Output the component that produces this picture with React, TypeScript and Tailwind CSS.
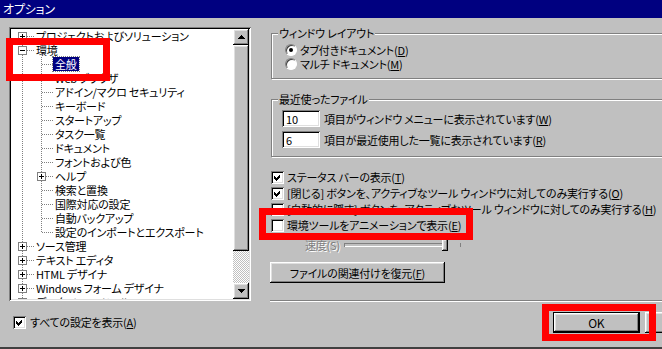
import React from 'react';

const raised =
  'shadow-[inset_-1px_-1px_0_#000,inset_1px_1px_0_#fff,inset_-2px_-2px_0_#808080,inset_2px_2px_0_#dfdfdf]';
const sunken =
  'shadow-[inset_1px_1px_0_#808080,inset_-1px_-1px_0_#fff,inset_2px_2px_0_#000,inset_-2px_-2px_0_#dfdfdf]';
const etched = 'border border-[#808080] shadow-[inset_1px_1px_0_#fff,1px_1px_0_#fff]';

type TreeRow = {
  label: string;
  level: 0 | 1;
  box?: '+' | '-';
  first?: boolean;
  last?: boolean;
  selected?: boolean;
};

const rows: TreeRow[] = [
  { label: 'プロジェクトおよびソリューション', level: 0, box: '+', first: true },
  { label: '環境', level: 0, box: '-' },
  { label: '全般', level: 1, selected: true },
  { label: 'Web ブラウザ', level: 1 },
  { label: 'アドイン/マクロ セキュリティ', level: 1 },
  { label: 'キーボード', level: 1 },
  { label: 'スタートアップ', level: 1 },
  { label: 'タスク一覧', level: 1 },
  { label: 'ドキュメント', level: 1 },
  { label: 'フォントおよび色', level: 1 },
  { label: 'ヘルプ', level: 1, box: '+' },
  { label: '検索と置換', level: 1 },
  { label: '国際対応の設定', level: 1 },
  { label: '自動バックアップ', level: 1 },
  { label: '設定のインポートとエクスポート', level: 1, last: true },
  { label: 'ソース管理', level: 0, box: '+' },
  { label: 'テキスト エディタ', level: 0, box: '+' },
  { label: 'HTML デザイナ', level: 0, box: '+' },
  { label: 'Windows フォーム デザイナ', level: 0, box: '+' },
  { label: 'データベース ツール', level: 0, box: '+' },
];

function Guide({
  vert,
  horiz,
  box,
}: {
  vert: 'full' | 'top' | 'bottom' | 'none';
  horiz: boolean;
  box?: '+' | '-';
}) {
  return (
    <svg width="19" height="14" className="shrink-0" shapeRendering="crispEdges">
      {vert !== 'none' && (
        <line
          x1="7.5"
          x2="7.5"
          y1={vert === 'bottom' ? 8 : 0}
          y2={vert === 'top' ? 8 : 14}
          stroke="#808080"
          strokeDasharray="1 1"
        />
      )}
      {horiz && <line x1="8" x2="19" y1="7.5" y2="7.5" stroke="#808080" strokeDasharray="1 1" />}
      {box && (
        <>
          <rect x="3.5" y="3.5" width="8" height="8" fill="#fff" stroke="#808080" />
          <line x1="5" x2="10" y1="7.5" y2="7.5" stroke="#000" />
          {box === '+' && <line x1="7.5" x2="7.5" y1="5" y2="10" stroke="#000" />}
        </>
      )}
    </svg>
  );
}

function Arrow({ down }: { down?: boolean }) {
  return (
    <svg width="7" height="4" shapeRendering="crispEdges">
      <path d={down ? 'M0 0H7L3.5 4Z' : 'M3.5 0L7 4H0Z'} fill="#000" />
    </svg>
  );
}

function Checkbox({ checked }: { checked?: boolean }) {
  return (
    <div className={`h-[13px] w-[13px] shrink-0 bg-white ${sunken}`}>
      {checked && (
        <svg width="13" height="13" shapeRendering="crispEdges">
          <path d="M3 5L5 7L9 3V6L5 10L3 8Z" fill="#000" />
        </svg>
      )}
    </div>
  );
}

function Radio({ checked }: { checked?: boolean }) {
  return (
    <div className="flex h-[12px] w-[12px] shrink-0 items-center justify-center rounded-full border border-t-[#808080] border-l-[#808080] border-r-white border-b-white bg-white shadow-[inset_1px_1px_0_#404040]">
      {checked && <div className="h-[4px] w-[4px] rounded-full bg-black" />}
    </div>
  );
}

function Tree() {
  return (
    <div className={`flex h-[274px] w-[242px] bg-white p-[2px] ${sunken}`}>
      <div className="w-[222px] overflow-hidden">
        {rows.map(r => (
          <div key={r.label} className="flex h-[14px] items-center pl-[4px] whitespace-nowrap">
            {r.level === 0 ? (
              <Guide vert={r.first ? 'bottom' : 'full'} horiz box={r.box} />
            ) : (
              <>
                <Guide vert="full" horiz={false} />
                <Guide vert={r.last ? 'top' : 'full'} horiz box={r.box} />
              </>
            )}
            <span
              className={`px-[2px] leading-[14px] ${
                r.selected ? 'bg-[#000080] text-white outline-1 outline-dotted outline-[#808080]' : ''
              }`}
            >
              {r.label}
            </span>
          </div>
        ))}
      </div>
      <div className="flex w-[16px] flex-col bg-[#c0c0c0]">
        <div className={`flex h-[16px] items-center justify-center ${raised}`}>
          <Arrow />
        </div>
        <div className={`h-[206px] bg-[#c0c0c0] ${raised}`} />
        <div className="h-[32px] bg-[repeating-conic-gradient(#fff_0_25%,#c0c0c0_0_50%)] bg-[length:2px_2px]" />
        <div className={`flex h-[16px] items-center justify-center ${raised}`}>
          <Arrow down />
        </div>
      </div>
    </div>
  );
}

export default function App() {
  return (
    <div className="relative h-[349px] w-[662px] overflow-hidden border-b-2 border-b-[#404040] bg-[#c0c0c0] font-['Noto_Sans_CJK_JP','Noto_Sans_CJK_SC',sans-serif] text-[11px] leading-[14px] tracking-[-0.2px] text-black [font-feature-settings:'palt']">
      <div className="flex h-[18px] items-center bg-[#000080] px-[3px] text-[12px] text-white">オプション</div>
      <div className="flex">
        {/* left: category tree */}
        <div className="w-[251px] shrink-0 pt-[9px] pl-[9px]">
          <Tree />
          <div className="mt-[14px] ml-[4px] flex items-center gap-[4px]">
            <Checkbox checked />
            <span>
              すべての設定を表示(<span className="underline">A</span>)
            </span>
          </div>
        </div>

        {/* right: settings page */}
        <div className="w-[480px] shrink-0 pl-[20px]">
          <div className={`mt-[15px] h-[46px] w-[420px] ${etched}`}>
            <div className="-mt-[8px] ml-[6px] w-fit bg-[#c0c0c0] px-[1px]">ウィンドウ レイアウト</div>
            <div className="mt-[3px] ml-[13px] flex h-[14px] items-center gap-[3px]">
              <Radio checked />
              <span>
                タブ付きドキュメント(<span className="underline">D</span>)
              </span>
            </div>
            <div className="ml-[13px] flex h-[14px] items-center gap-[3px]">
              <Radio />
              <span>
                マルチ ドキュメント(<span className="underline">M</span>)
              </span>
            </div>
          </div>

          <div className={`mt-[20px] h-[58px] w-[420px] ${etched}`}>
            <div className="-mt-[8px] ml-[6px] w-fit bg-[#c0c0c0] px-[1px]">最近使ったファイル</div>
            <div className="mt-[4px] ml-[10px] flex items-center gap-[4px]">
              <div className={`h-[17px] w-[38px] bg-white pt-[2px] pl-[4px] ${sunken}`}>10</div>
              <span>
                項目がウィンドウ メニューに表示されています(<span className="underline">W</span>)
              </span>
            </div>
            <div className="mt-[4px] ml-[10px] flex items-center gap-[4px]">
              <div className={`h-[17px] w-[38px] bg-white pt-[2px] pl-[4px] ${sunken}`}>6</div>
              <span>
                項目が最近使用した一覧に表示されています(<span className="underline">R</span>)
              </span>
            </div>
          </div>

          <div className="mt-[12px] whitespace-nowrap">
            <div className="flex h-[16px] items-center gap-[3px]">
              <Checkbox checked />
              <span>
                ステータス バーの表示(<span className="underline">T</span>)
              </span>
            </div>
            <div className="flex h-[16px] items-center gap-[3px]">
              <Checkbox checked />
              <span>
                [閉じる] ボタンを、アクティブなツール ウィンドウに対してのみ実行する(
                <span className="underline">O</span>)
              </span>
            </div>
            <div className="flex h-[16px] items-center gap-[3px]">
              <Checkbox />
              <span>
                [自動的に隠す] ボタンを、アクティブなツール ウィンドウに対してのみ実行する(
                <span className="underline">H</span>)
              </span>
            </div>
            <div className="flex h-[16px] items-center gap-[3px]">
              <Checkbox />
              <span>
                環境ツールをアニメーションで表示(<span className="underline">E</span>)
              </span>
            </div>
            <div className="flex h-[20px] items-center pt-[4px]">
              <span className="ml-[34px] text-[#808080] [text-shadow:1px_1px_0_#fff]">速度(S)</span>
              <div className="ml-[4px] h-[4px] w-[100px] shadow-[inset_1px_1px_0_#808080,inset_-1px_-1px_0_#fff]" />
              <div className={`-ml-[2px] h-[12px] w-[6px] ${raised}`} />
              <div className="ml-[12px] h-[4px] w-px bg-[#808080]" />
            </div>
          </div>

          <div
            className={`mt-[9px] -ml-px flex h-[21px] w-[175px] items-center justify-center ${raised}`}
          >
            ファイルの関連付けを復元(<span className="underline">F</span>)
          </div>

          <div className="mt-[17px] -ml-px h-[2px] w-[460px] border-t border-t-[#808080] border-b border-b-white" />

          <div className="mt-[10px] ml-[282px] flex gap-[5px]">
            <div className="h-[21px] w-[88px] border border-black">
              <div className={`flex h-full w-full items-center justify-center text-[12px] ${raised}`}>OK</div>
            </div>
            <div className={`flex h-[21px] w-[88px] items-center justify-center ${raised}`}>キャンセル</div>
          </div>
        </div>
      </div>

      {/* red highlight marks */}
      <div className="pointer-events-none absolute top-[38px] left-[6px] h-[43px] w-[104px] border-[7px] border-[#ff0000]" />
      <div className="pointer-events-none absolute top-[208px] left-[259px] h-[32px] w-[214px] border-[7px] border-[#ff0000]" />
      <div className="pointer-events-none absolute top-[304px] left-[542px] h-[37px] w-[114px] border-[7px] border-[#ff0000]" />
    </div>
  );
}
